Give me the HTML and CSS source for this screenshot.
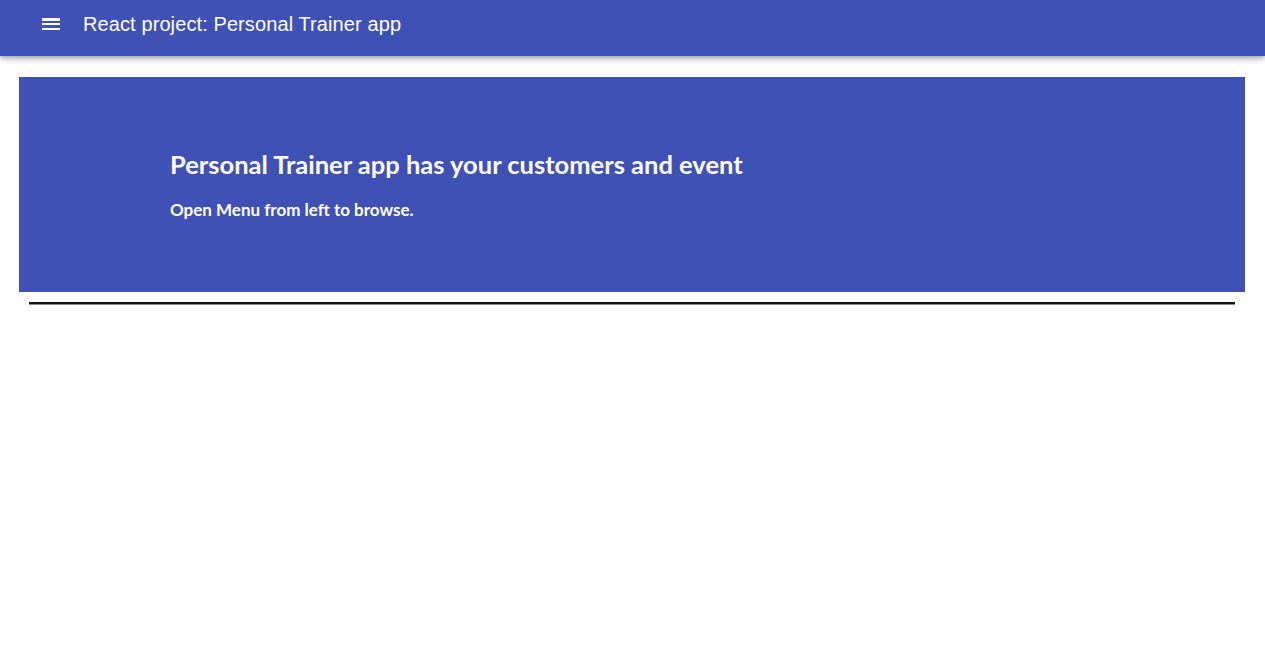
FILE: index.html
```html
<!DOCTYPE html>
<html>
<head>
<meta charset="utf-8">
<link rel="stylesheet" href="styles.css">
</head>
<body>
<header class="appbar">
  <button class="menu-btn" aria-label="menu">
    <svg viewBox="0 0 24 24" width="24" height="24"><path fill="#fff" d="M3 18h18v-2H3v2zm0-5h18v-2H3v2zm0-6v2h18V6H3z"/></svg>
  </button>
  <h1 class="title">React project: Personal Trainer app</h1>
</header>
<main class="content">
  <section class="hero">
    <h2 class="hero-title">Personal Trainer app has your customers and event</h2>
    <p class="hero-sub">Open Menu from left to browse.</p>
  </section>
  <hr class="divider">
</main>
</body>
</html>
```
FILE: styles.css
```css
html, body { margin: 0; padding: 0; background: #fff; }
body { font-family: "Liberation Sans", Arial, sans-serif; }
.appbar {
  height: 56px;
  box-sizing: border-box;
  background: #3f51b5;
  display: flex;
  align-items: flex-start;
  padding: 0 24px 0 27px;
  box-shadow: 0 2px 4px -1px rgba(0,0,0,0.2), 0 4px 5px 0 rgba(0,0,0,0.14), 0 1px 10px 0 rgba(0,0,0,0.12);
  position: relative;
}
.menu-btn {
  width: 48px; height: 48px;
  border: 0; background: transparent; padding: 12px;
  display: flex; align-items: center; justify-content: center;
  margin-right: 8px;
}
.menu-btn svg { display: block; }
.title {
  margin: 0;
  color: #fff;
  font-size: 20px;
  line-height: 48px;
  font-weight: 400;
  font-family: "Liberation Sans", Arial, sans-serif;
  letter-spacing: 0.1px;
}
.content { padding: 21px 20px 0 19px; }
.hero {
  background: #3f51b5;
  height: 215px;
  box-sizing: border-box;
  padding: 72px 0 0 151px;
  color: #fff;
  font-family: Lato, "Open Sans", sans-serif;
}
.hero-title { margin: 0; font-size: 25.5px; font-weight: 700; line-height: 30px; }
.hero-sub { margin: 20px 0 0; font-size: 17px; font-weight: 700; line-height: 22px; }
.divider {
  margin: 10px 10px 0;
  border: 0;
  border-top: 2px solid #111;
  border-bottom: 1px solid #888;
  height: 0;
}
```
